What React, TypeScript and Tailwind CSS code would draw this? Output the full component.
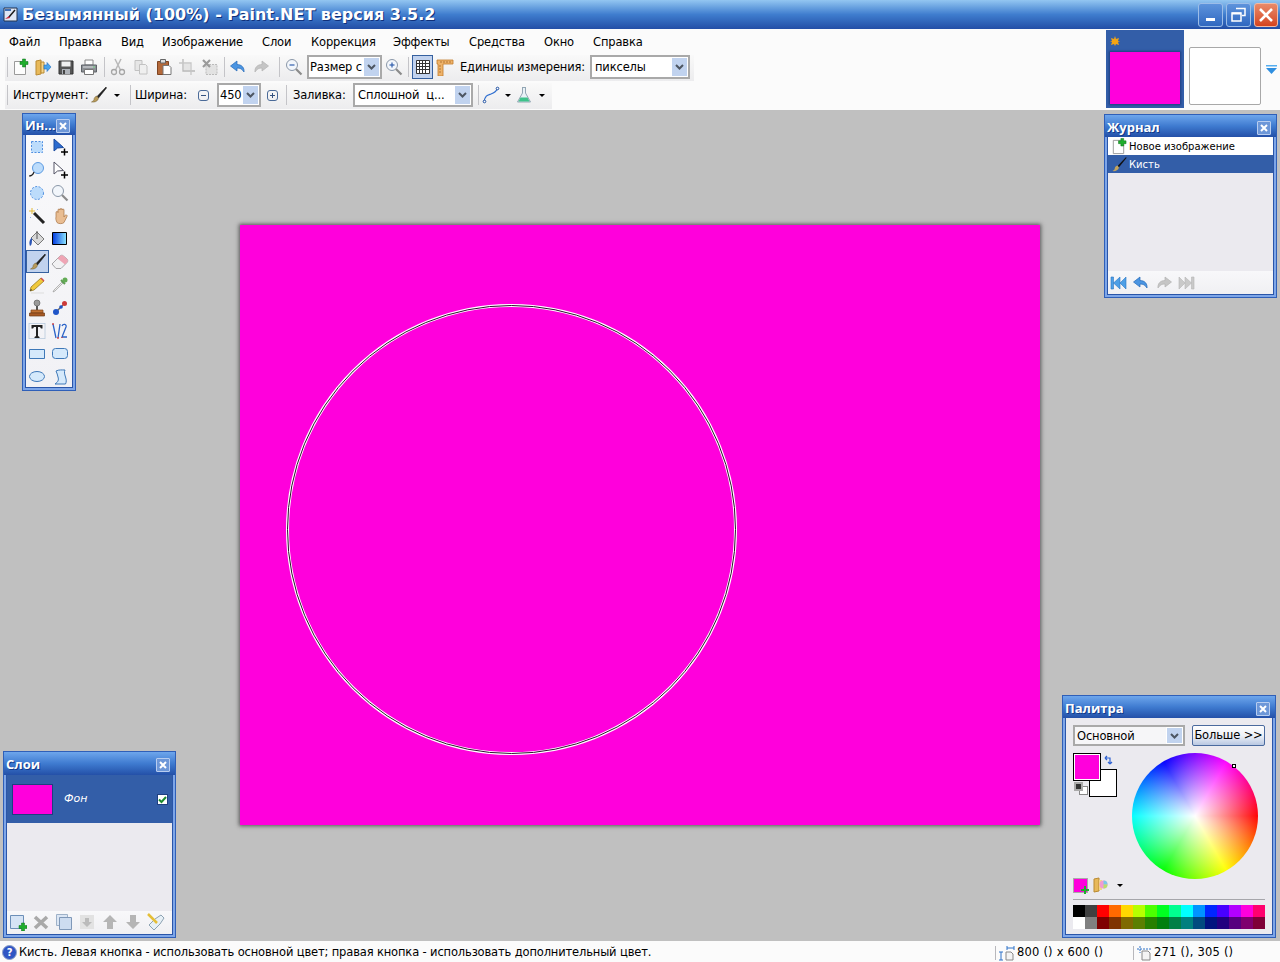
import React from "react";

const F = "font-['DejaVu_Sans',sans-serif]";
type P = { className?: string };
const S = ({ s = 18, children, v = 18 }: { s?: number; v?: number; children: React.ReactNode }) => (
  <svg width={s} height={s} viewBox={`0 0 ${v} ${v}`} className="block shrink-0">{children}</svg>
);

const Plus = ({ x, y, c = "#1fae2c" }: { x: number; y: number; c?: string }) => (
  <path d={`M${x - 1.5} ${y - 4}h3v2.5h2.5v3h-2.5v2.5h-3v-2.5h-2.5v-3h2.5z`} fill={c} stroke="#0b6d18" strokeWidth=".5" />
);
const NewDoc = () => <S><path d="M3.500 3.500h9l2 2v11h-11z" fill="#fdfdfd" stroke="#9a9a9a" /><Plus x={13} y={5} /></S>;
const Folder = () => <S><path d="M2 3l5-1v14l-5 1z" fill="#e8b95a" stroke="#b98a33" /><path d="M7 4h3v11H7z" fill="#f4d58a" stroke="#b98a33" /><path d="M10 7h3V4.500l4 4.500-4 4.500V11h-3z" fill="#49a3ea" stroke="#2570c0" strokeWidth=".6" /></S>;
const Save = () => <S><path d="M2 3h14v13H2z" fill="#555" stroke="#333" /><path d="M4.500 3.500h9v5h-9z" fill="#f0f0f0" /><path d="M5 11h8v5H5z" fill="#aeb2b8" /><path d="M6 12h2v4H6z" fill="#444" /></S>;
const Print = () => <S><path d="M5 2h8v5H5z" fill="#fff" stroke="#888" /><path d="M1.500 7h15v7h-15z" fill="#8d9196" stroke="#5f6368" /><path d="M4.500 11.500h9v5h-9z" fill="#fff" stroke="#777" /><path d="M3 9h12" stroke="#dfe1e4" /><circle cx="14" cy="9" r=".8" fill="#52c466" /></S>;
const Cut = () => <S><path d="M6 1l5.500 11M12 1L6.500 12" stroke="#b9b9b9" strokeWidth="1.500" fill="none" /><circle cx="5" cy="14" r="2.500" fill="none" stroke="#a5a5a5" strokeWidth="1.300" /><circle cx="13" cy="14" r="2.500" fill="none" stroke="#a5a5a5" strokeWidth="1.300" /></S>;
const Copy = () => <S><path d="M3 2.500h7v10H3z" fill="#e6e6e6" stroke="#c2c2c2" /><path d="M7.500 6.500h6l1.500 1.500v8H7.500z" fill="#efefef" stroke="#c2c2c2" /></S>;
const Paste = () => <S><path d="M2.500 3.500h11v13h-11z" fill="#b4693a" stroke="#7f4522" /><path d="M5.500 1.500h5v3.500h-5z" fill="#ddd" stroke="#666" /><path d="M8 7.500h6l2 2v7H8z" fill="#fff" stroke="#777" /></S>;
const Crop = () => <S><path d="M5 1v12h12" fill="none" stroke="#b8b8b8" strokeWidth="1.300" /><path d="M1 5h12v12" fill="none" stroke="#c6c6c6" strokeWidth="1.300" /><path d="M6 6h6v6H6z" fill="#e4e4e4" /></S>;
const Desel = () => <S><path d="M5 6.500h11v10H5z" fill="#e2e2e2" stroke="#bbb" strokeDasharray="2 1" /><path d="M2 2l7 7M9 2l-7 7" stroke="#9b9b9b" strokeWidth="2.200" /></S>;
const Undo = ({ c = "#4b95e2", d = "#2468b8" }: { c?: string; d?: string }) => <S><path d="M8 3L1.500 8 8 13v-3c3 0 5 .8 7 4 .5-4-2-7.500-7-7.500z" fill={c} stroke={d} strokeWidth=".7" strokeLinejoin="round" /></S>;
const Redo = ({ c = "#c5c5c5", d = "#b3b3b3" }: { c?: string; d?: string }) => <S><path d="M10 3l6.500 5L10 13v-3c-3 0-5 .8-7 4-.5-4 2-7.500 7-7.500z" fill={c} stroke={d} strokeWidth=".7" strokeLinejoin="round" /></S>;
const Mag = ({ sign }: { sign?: "+" | "-" }) => <S><circle cx="7" cy="7" r="5.500" fill="#f2f6fb" stroke="#8a97a8" /><path d="M11 11l5.500 5.500" stroke="#8b8b8b" strokeWidth="2.200" />{sign && <path d="M4.500 7h5" stroke="#2f5fae" strokeWidth="1.200" />}{sign === "+" && <path d="M7 4.500v5" stroke="#2f5fae" strokeWidth="1.200" />}</S>;
const Grid = () => <S s={16} v={16}><path d="M1.500 1.500h13v13h-13z" fill="#fff" stroke="#333" /><path d="M4.500 1.500v13M7.500 1.500v13M10.500 1.500v13M1.500 4.500h13M1.500 7.500h13M1.500 10.500h13" stroke="#333" /></S>;
const Ruler = () => <S s={18}><path d="M1 2h16v4H7v12H2V6H1z" fill="#eeb36a" stroke="#c17c2c" strokeWidth=".8" /><path d="M5 3v2M8 3v2M11 3v2M14 3v2M3 8h2M3 11h2M3 14h2" stroke="#9a5d1d" strokeWidth=".7" /></S>;
const Brush = () => <S><path d="M17 1L8 10.500l1.500 1.500L17.500 2z" fill="#222" stroke="#111" strokeWidth=".5" /><path d="M8 10c-2 .5-3 2-3 3.500-.3 1.500-2 2-2.500 2.500 3 .5 6-.5 7-3.500z" fill="#b89a5a" stroke="#6c5a2f" strokeWidth=".5" /></S>;
const Curve = () => <S><path d="M2 16c1-7 4-7 7-8s5-2 7-6" fill="none" stroke="#2f6fd0" strokeWidth="1.300" /><circle cx="2.500" cy="15.500" r="1.300" fill="#fff" stroke="#1f4fa0" /><circle cx="15.500" cy="2.500" r="1.300" fill="#fff" stroke="#1f4fa0" /></S>;
const Flask = () => <S><path d="M7 1.500h4M7.500 2v5L2.500 16h13l-5-9V2" fill="#e9f1f6" stroke="#93a6b4" /><path d="M5.500 11.500h7l2 4H3.500z" fill="#3ec28a" /></S>;
const Caret = () => <span className="block w-0 h-0 border-x-[3px] border-x-transparent border-t-[3px] border-t-black" />;
const Arr = () => <svg width="9" height="6" viewBox="0 0 9 6"><path d="M1 1l3.500 3.500L8 1" fill="none" stroke="#4d5662" strokeWidth="2" /></svg>;

const ToolDash = ({ round }: { round?: boolean }) => <S>{round ? <circle cx="9" cy="9" r="6.500" fill="#bcdcfb" stroke="#4f8fe0" strokeDasharray="2 1.500" /> : <path d="M3.500 3.500h11v11h-11z" fill="#bcdcfb" stroke="#4f8fe0" strokeDasharray="2 1.500" />}</S>;
const Cross = () => <path d="M13.500 10.500v7M10 14h7" stroke="#000" strokeWidth="1.500" />;
const Tools = [
  () => <ToolDash />,
  () => <S><path d="M3 1v12l3.500-3 6-.5z" fill="#2c6cd0" stroke="#1b4a9e" /><Cross /></S>,
  () => <S><circle cx="10" cy="7" r="5.500" fill="#bcdcfb" stroke="#5d9be2" /><path d="M6 11c-1 3-3 4-5 4" fill="none" stroke="#222" strokeWidth="1.200" /></S>,
  () => <S><path d="M3 1v12l3.500-3 6-.5z" fill="#fff" stroke="#556" /><Cross /></S>,
  () => <ToolDash round />,
  () => <Mag />,
  () => <S><path d="M6 6l10 10" stroke="#222" strokeWidth="3" /><path d="M4 1v6M1 4h6" stroke="#e2b93a" strokeWidth="1" /><path d="M9 2l1 1M2 10l1 1" stroke="#8fb4e8" /></S>,
  () => <S><path d="M5 9V5.500a1 1 0 012 0V3a1 1 0 012 0v-.5a1 1 0 012 0V3a1 1 0 012 0v7l1-1.500a1 1 0 012 1l-3 6c-1 1.500-6 1.500-7 0-1-2-1.500-4-1-5.500z" fill="#e9bd92" stroke="#a87445" strokeWidth=".7" /></S>,
  () => <S><path d="M9 2l7 7-6 6-7-7z" fill="#d8d8d8" stroke="#777" /><path d="M4 8c-3 1-3 6-2 8 2-1 2-4 2-8z" fill="#2b55b5" /><path d="M9 1v8" stroke="#555" /></S>,
  () => <svg width="15" height="13" viewBox="0 0 15 13"><defs><linearGradient id="gt" x1="0" x2="1" y1="0" y2="0"><stop offset="0" stopColor="#0038e0" /><stop offset="1" stopColor="#8fe8ff" /></linearGradient></defs><path d="M.5.5h14v12H.5z" fill="url(#gt)" stroke="#000" strokeWidth="1" /></svg>,
  () => <Brush />,
  () => <S><path d="M1 11l8-8c1-1 2.500-1 3.500 0l3.500 3c1 1 1 2.500 0 3.500L10 15.500H5z" fill="#f1f1f3" stroke="#a5a5a8" /><path d="M6.500 5.500l2.500-2.500c1-1 2.500-1 3.500 0l3.500 3c1 1 1 2.500 0 3.500l-2 2z" fill="#efa5b5" /></S>,
  () => <S><path d="M2 15l1-4 10-9 3 3-10 9z" fill="#f0c93c" stroke="#8a6d14" strokeWidth=".7" /><path d="M13 2l3 3" stroke="#d24f4f" strokeWidth="1.500" /><path d="M2 15l1-2 1 1z" fill="#222" /><path d="M3 17h13" stroke="#ddd" /></S>,
  () => <S><path d="M11 6l-8 8-1 2 2-1 8-8z" fill="#eee" stroke="#999" strokeWidth=".7" /><path d="M10 4l4 4" stroke="#5c9b52" strokeWidth="2" /><circle cx="14" cy="4" r="2.500" fill="#62ab55" /></S>,
  () => <S><circle cx="9" cy="4" r="3" fill="#9a9a9a" stroke="#555" strokeWidth=".6" /><path d="M8 7h2v5H8z" fill="#555" /><path d="M3 11h12v3H3z" fill="#c07133" stroke="#7f451b" strokeWidth=".7" /><path d="M1.500 14h15v3h-15z" fill="#a85a25" stroke="#6b3a15" strokeWidth=".7" /></S>,
  () => <S><path d="M6 12l6-6" stroke="#666" strokeWidth="1.500" /><circle cx="5" cy="13" r="3" fill="#1f55c8" /><circle cx="10" cy="8" r="1.800" fill="#1f55c8" /><circle cx="13.500" cy="4.500" r="2.500" fill="#cc3a3a" /></S>,
  () => <S><path d="M1 1.500h16M1 16.500h16M1 1v16M17 1v16" stroke="#b7c9dd" strokeWidth=".8" /><path d="M3.500 3h11v3.500h-1.500L12 5h-2v9l1.500 1v1h-5v-1l1.500-1V5H6L5 6.500H3.500z" fill="#222" /></S>,
  () => <S><path d="M2 2l3 14M9 2L7 16" stroke="#2a63c8" strokeWidth="1.300" /><path d="M11 4c1-2.500 5-2 4 1l-4 10h5" fill="none" stroke="#2a63c8" strokeWidth="1.300" /><path d="M2 1v2M7 15v2M11 15v1" stroke="#d13a3a" strokeWidth="1.300" /></S>,
  () => <svg width="16" height="10" viewBox="0 0 16 10"><path d="M.5.5h15v9H.5z" fill="#d5e9fb" stroke="#3e78b8" /></svg>,
  () => <svg width="16" height="11" viewBox="0 0 16 11"><rect x=".5" y=".5" width="15" height="10" rx="3" fill="#d5e9fb" stroke="#3e78b8" /></svg>,
  () => <svg width="16" height="11" viewBox="0 0 16 11"><ellipse cx="8" cy="5.500" rx="7.500" ry="5" fill="#d5e9fb" stroke="#3e78b8" /></svg>,
  () => <S><path d="M5 3c3-1.500 6-1 9-1-1 2-.5 4 .5 7 1 3 1 5 0 7H4c3-2 4-4 3-7-.5-2-1-4-2-6z" fill="#d5e9fb" stroke="#3e78b8" /></S>,
];

const Sep = ({ className = "" }: P) => <span className={`block w-px h-[20px] bg-[#c4c4c8] ${className}`} />;
const B = ({ children, className = "" }: { children: React.ReactNode; className?: string }) => (
  <span className={`flex items-center justify-center w-[23px] h-[22px] shrink-0 ${className}`}>{children}</span>
);
const Combo = ({ text, className, clip }: { text: string; className: string; clip?: boolean }) => (
  <div className={`flex h-[24px] border-2 border-[#a9a9a9] bg-white shrink-0 ${className}`}>
    <span className={`flex-1 min-w-0 overflow-hidden whitespace-pre leading-[20px] ${clip ? "pl-px" : "pl-[3px]"}`}>{text}</span>
    <span className="flex items-center justify-center w-[17px] bg-[#c1d3ef] border border-white"><Arr /></span>
  </div>
);

const X = () => (
  <span className="flex items-center justify-center w-[14px] h-[14px] bg-[#6d97d8] border border-[#b8cdf0] rounded-[1px]">
    <svg width="8" height="8" viewBox="0 0 8 8"><path d="M1 1l6 6M7 1L1 7" stroke="#fff" strokeWidth="2" /></svg>
  </span>
);
const Win = ({ title, className, children, bar = "" }: { title: string; className: string; children: React.ReactNode; bar?: string }) => (
  <div className={`absolute flex flex-col border border-[#2f5fb8] bg-[#7ea6e8] px-[2px] pb-[2px] ${className}`}>
    <div className={`flex items-center justify-between shrink-0 -mx-[2px] pl-[2px] pr-[5px] pt-[3px] bg-gradient-to-b from-[#6ea6ec] via-[#3f7bd0] to-[#2450a8] text-white font-bold text-[13px] font-['Open_Sans',sans-serif] tracking-normal [text-shadow:1px_1px_0_#123a8a] ${bar}`}>
      <span className="whitespace-nowrap">{title}</span>
      <X />
    </div>
    <div className="flex flex-col flex-1 min-h-0 border border-t-0 border-[#2a55a8] bg-[#ebeaef] overflow-hidden">{children}</div>
  </div>
);
const TB = ({ children, className = "" }: { children: React.ReactNode; className?: string }) => (
  <div className={`flex items-center mt-auto h-[23px] bg-gradient-to-b from-[#f8f8fa] to-[#f0f0f3] ${className}`}>{children}</div>
);

const top = ["#000000","#404040","#ff0000","#ff6a00","#ffd800","#b6ff00","#4cff00","#00ff21","#00ff90","#00ffff","#0094ff","#0026ff","#4800ff","#b200ff","#ff00dc","#ff006e"];
const bot = ["#ffffff","#808080","#7f0000","#7f3300","#7f6a00","#5b7f00","#267f00","#007f0e","#007f46","#007f7f","#004a7f","#00137f","#21007f","#57007f","#7f006e","#7f0037"];

const menu: [string, string][] = [["Файл","w-[50px]"],["Правка","w-[62px]"],["Вид","w-[41px]"],["Изображение","w-[100px]"],["Слои","w-[49px]"],["Коррекция","w-[82px]"],["Эффекты","w-[76px]"],["Средства","w-[75px]"],["Окно","w-[49px]"],["Справка","w-[60px]"]];

export default function App() {
  return (
    <div className={`flex flex-col w-[1280px] h-[962px] overflow-hidden bg-[#c0c0c0] text-[11.5px] text-black tracking-[-0.15px] ${F}`}>
      {/* Title bar */}
      <div className="flex items-center h-[29px] shrink-0 bg-gradient-to-b from-[#93c6f1] via-[#3f7dce] to-[#234ea6]">
        <div className="ml-[3px] w-[15px] h-[15px] shrink-0">
          <svg width="15" height="15" viewBox="0 0 15 15"><path d="M1 1h13v13H1z" fill="#dfe7f5" stroke="#22324f" /><path d="M12 3l-6 7" stroke="#1a1a1a" strokeWidth="1.500" /><path d="M2 12l5-1-1-2z" fill="#c9273a" /><path d="M2 2h6v2H2z" fill="#3f6fb5" /></svg>
        </div>
        <span className="ml-[4px] text-white font-bold text-[16px] tracking-normal whitespace-nowrap [text-shadow:1px_1px_0_#10307a]">Безымянный (100%) - Paint.NET версия 3.5.2</span>
        <div className="ml-auto mr-[2px] flex gap-[3px]">
          <span className="flex items-end justify-center pb-[5px] w-[25px] h-[24px] rounded-[3px] border border-[#9cbde8] bg-gradient-to-b from-[#5d93dc] to-[#3068c0]"><span className="block w-[9px] h-[3px] bg-white" /></span>
          <span className="flex items-center justify-center w-[25px] h-[24px] rounded-[3px] border border-[#9cbde8] bg-gradient-to-b from-[#5d93dc] to-[#3068c0]">
            <svg width="15" height="15" viewBox="0 0 15 15"><path d="M5 1.500h9v7h-3M1 6h9v8H1z" fill="none" stroke="#fff" strokeWidth="1.500" /><path d="M1 6.500h9" stroke="#fff" strokeWidth="2" /></svg>
          </span>
          <span className="flex items-center justify-center w-[24px] h-[24px] rounded-[3px] border border-[#f0b9a5] bg-gradient-to-b from-[#e88a6a] to-[#d5431c]">
            <svg width="14" height="14" viewBox="0 0 14 14"><path d="M1 1l12 12M13 1L1 13" stroke="#fff" strokeWidth="2.600" /></svg>
          </span>
        </div>
      </div>

      {/* Menu, toolbars, thumbnails */}
      <div className="flex h-[81px] shrink-0 bg-[#fbfbfb]">
        <div className="flex-1 min-w-0">
          <div className="flex items-center h-[26px] pl-[9px] pt-px">
            {menu.map(([m, w]) => <span key={m} className={`block whitespace-nowrap ${w}`}>{m}</span>)}
          </div>
          <div className="flex items-center w-[689px] h-[26px] ml-[5px] pl-[2px] pb-[2px] bg-gradient-to-b from-[#f9f9f9] to-[#ececee]">
            <Sep />
            <B><NewDoc /></B><B><Folder /></B><B><Save /></B><B><Print /></B>
            <Sep className="ml-[4px] mr-[1px]" />
            <B><Cut /></B><B><Copy /></B><B><Paste /></B><B><Crop /></B><B><Desel /></B>
            <Sep className="ml-[3px] mr-[1px]" />
            <B><Undo /></B><B><Redo /></B>
            <Sep className="ml-[7px] mr-[1px]" />
            <B className="ml-[1px]"><Mag sign="-" /></B>
            <Combo text="Размер с" clip className="w-[75px] ml-[2px]" />
            <B><Mag sign="+" /></B>
            <Sep className="ml-[3px]" />
            <span className="flex items-center justify-center ml-[3px] w-[21px] h-[24px] bg-[#c1d2ee] border border-[#35609f]"><Grid /></span>
            <B><Ruler /></B>
            <span className="ml-[4px] w-[130px] pt-px whitespace-nowrap">Единицы измерения:</span>
            <Combo text="пикселы" className="w-[100px]" />
          </div>
          <div className="flex items-center w-[547px] h-[26px] mt-[2px] ml-[5px] pl-[2px] pb-[2px] bg-gradient-to-b from-[#f9f9f9] to-[#ececee]">
            <Sep />
            <span className="ml-[5px] w-[73px] pt-px whitespace-nowrap">Инструмент:</span>
            <span className="ml-[3px]"><Brush /></span>
            <span className="ml-[7px]"><Caret /></span>
            <Sep className="ml-[10px]" />
            <span className="ml-[4px] w-[52px] pt-px whitespace-nowrap">Ширина:</span>
            <span className="flex items-center justify-center ml-[11px] w-[11px] h-[11px] rounded-[3px] border border-[#4a6a98] text-[#34527f]"><span className="block w-[5px] h-px bg-[#34527f]" /></span>
            <Combo text="450" clip className="w-[44px] ml-[8px]" />
            <span className="relative flex items-center justify-center ml-[6px] w-[11px] h-[11px] rounded-[3px] border border-[#4a6a98]"><span className="block w-[5px] h-px bg-[#34527f]" /><span className="absolute block w-px h-[5px] bg-[#34527f]" /></span>
            <Sep className="ml-[8px]" />
            <span className="ml-[6px] w-[54px] pt-px whitespace-nowrap">Заливка:</span>
            <Combo text="Сплошной  ц..." className="w-[120px] ml-[6px]" />
            <Sep className="ml-[5px]" />
            <span className="ml-[3px]"><Curve /></span>
            <span className="ml-[5px]"><Caret /></span>
            <span className="ml-[4px]"><Flask /></span>
            <span className="ml-[6px]"><Caret /></span>
          </div>
        </div>
        <div className="flex w-[174px] shrink-0 items-start pt-px">
          <div className="flex flex-col w-[78px] h-[78px] bg-[#335ea8] px-[4px] shrink-0">
            <div className="h-[22px] flex items-center">
              <svg width="10" height="10" viewBox="0 0 10 10"><path d="M5 0l1 3 3-1-1 3 2 0-2 1 1 3-3-1-1 2-1-2-3 1 1-3-2-1 2 0-1-3 3 1z" fill="#f3a414" /></svg>
            </div>
            <div className="w-[70px] h-[52px] bg-[#ff00dc] shadow-[0_0_2px_1px_#1c3c80]" />
          </div>
          <div className="ml-[5px] mt-[17px] w-[72px] h-[58px] bg-white border border-[#a8a8a8] rounded-[2px]" />
          <svg className="ml-[5px] mt-[35px]" width="11" height="10" viewBox="0 0 11 10"><path d="M0 0h11v1.500H0z" fill="#55aef0" /><path d="M0 3h11L5.500 9z" fill="#2f8fe0" /></svg>
        </div>
      </div>

      {/* Workspace */}
      <div className="relative flex-1 min-h-0 flex items-center justify-center pb-px bg-[#c0c0c0]">
        <div className="relative w-[800px] h-[600px] bg-[#ff00dc] shadow-[0_0_4px_1px_#555]">
          <svg className="absolute left-0 top-0" width="800" height="600" viewBox="0 0 800 600">
            <circle cx="271.500" cy="304.500" r="224" fill="none" stroke="#fff" strokeWidth="3" />
            <circle cx="271.500" cy="304.500" r="224" fill="none" stroke="#301030" strokeWidth="1" />
          </svg>
        </div>

        {/* Tools */}
        <Win title="Ин..." bar="h-[21px]" className="left-[22px] top-[3px] w-[54px] h-[278px]">
          <div className="grid grid-cols-[23px_23px] auto-rows-[23px] justify-start bg-gradient-to-b from-[#f9f9fb] to-[#f1f1f5] flex-1">
            {Tools.map((T, i) => (
              <span key={i} className={`flex items-center justify-center pr-[2px] ${i === 10 ? "bg-[#c1d2ee] border border-[#35609f]" : ""}`}><T /></span>
            ))}
          </div>
        </Win>

        {/* History */}
        <Win title="Журнал" bar="h-[22px]" className="left-[1104px] top-[4px] w-[173px] h-[184px]">
          <div className="flex items-center h-[18px] bg-white shrink-0 text-[10px] tracking-normal"><span className="w-[21px] pl-[2px]"><S s={17}><path d="M3.500 2.500h9l2 2v12h-11z" fill="#fff" stroke="#9a9a9a" /><Plus x={13} y={4.500} /></S></span><span>Новое изображение</span></div>
          <div className="flex items-center h-[18px] bg-[#335ea8] text-white shrink-0 text-[10px] tracking-normal"><span className="w-[21px] pl-[2px]"><S s={17}><path d="M17 1L8 10.500l1.500 1.500L17.500 2z" fill="#111" /><path d="M8 10c-2 .5-3 2-3 3.500-.3 1.500-2 2-2.500 2.500 3 .5 6-.5 7-3.500z" fill="#c2a35c" /></S></span><span>Кисть</span></div>
          <TB className="pl-[1px] gap-[5px]">
            <svg width="18" height="14" viewBox="0 0 18 14"><path d="M2 1h2.500v12H2zM11 1v12L4.500 7zM17 1v12l-6-6z" fill="#4d9fe6" stroke="#2a76c2" strokeWidth=".6" /></svg>
            <Undo />
            <Redo />
            <svg width="18" height="14" viewBox="0 0 18 14"><path d="M16 1h-2.500v12H16zM7 1v12l6.500-6zM1 1v12l6-6z" fill="#c9c9c9" stroke="#b5b5b5" strokeWidth=".6" /></svg>
          </TB>
        </Win>

        {/* Layers */}
        <Win title="Слои" bar="h-[23px]" className="left-[3px] top-[641px] w-[173px] h-[187px]">
          <div className="flex items-center h-[48px] bg-[#335ea8] text-white shrink-0 pl-[5px]">
            <div className="w-[41px] h-[31px] bg-[#ff00dc] border border-[#1e3f80]" />
            <span className="ml-[11px] text-[11px] tracking-normal italic">Фон</span>
            <span className="ml-auto mr-[4px] flex items-center justify-center w-[11px] h-[11px] bg-white border border-[#1e3f80]">
              <svg width="9" height="9" viewBox="0 0 9 9"><path d="M1 4.500l2.500 2.500L8 2" fill="none" stroke="#1c8a2e" strokeWidth="2" /></svg>
            </span>
          </div>
          <TB className="pl-[2px] pb-[2px] gap-[5px]">
            <S><path d="M1.500 2.500h13v13h-13z" fill="#d6e4f5" stroke="#6c8fb8" /><Plus x={14} y={14} /></S>
            <S><path d="M3 4l12 11M15 4L3 15" stroke="#a9a9a9" strokeWidth="3.600" /></S>
            <S><path d="M1.500 1.500h11v11h-11z" fill="#dbe6f4" stroke="#9eb1c8" /><path d="M4.500 4.500h12v12h-12z" fill="#cddcf0" stroke="#7f98b8" /></S>
            <S><path d="M2 2h14v14H2z" fill="#e2e2e2" /><path d="M7 5h4v4h3l-5 5-5-5h3z" fill="#bbb" /></S>
            <S><path d="M9 2l7 7h-4v7H6V9H2z" fill="#b5b5b5" /></S>
            <S><path d="M9 16l7-7h-4V2H6v7H2z" fill="#b5b5b5" /></S>
            <S><path d="M8 6l6-4 3 3-4 6-6 6-5-5z" fill="#e7f0f6" stroke="#8ca2b2" /><path d="M1 1l9 9" stroke="#e5bf38" strokeWidth="2.500" /></S>
          </TB>
        </Win>

        {/* Palette */}
        <Win title="Палитра" bar="h-[22px]" className="left-[1062px] top-[585px] w-[214px] h-[243px]">
          <div className="flex flex-col px-[7px] pt-[7px]">
            <div className="flex justify-between">
              <div className="flex h-[21px] w-[112px] border-2 border-[#a9a9a9] bg-[#f6f6f8]">
                <span className="flex-1 pl-[2px] leading-[18px]">Основной</span>
                <span className="flex items-center justify-center w-[17px] bg-[#c1d3ef] border border-white"><Arr /></span>
              </div>
              <span className="flex items-center justify-center w-[73px] h-[21px] whitespace-nowrap rounded-[2px] border border-[#4a6a9e] bg-gradient-to-b from-[#fdfdfe] via-[#eef1f7] to-[#b9c8e2]">Больше &gt;&gt;</span>
            </div>
            <div className="flex mt-[7px]">
              <div className="w-[44px] h-[45px] shrink-0 relative">
                <div className="absolute left-[16px] top-[16px] w-[28px] h-[28px] bg-white border border-black" />
                <div className="absolute left-0 top-0 w-[28px] h-[28px] bg-[#ff00dc] border border-black outline outline-1 outline-white -outline-offset-2" />
                <svg className="absolute left-[31px] top-[2px]" width="10" height="11" viewBox="0 0 10 11"><path d="M1 3h5v6M1 3l2-2M1 3l2 2M6 9l-2-2M6 9l2-2" fill="none" stroke="#2f62d2" strokeWidth="1.200" /></svg>
                <div className="absolute left-[6px] top-[33px] w-[9px] h-[9px] bg-white border border-[#888]" />
                <div className="absolute left-[1px] top-[29px] w-[9px] h-[9px] bg-[#333] border-2 border-[#aaa]" />
              </div>
              <div className="relative ml-[15px] w-[126px] h-[126px] rounded-full shrink-0 bg-[radial-gradient(circle,#ffffff_0%,#ffffff00_72%),conic-gradient(from_0deg,#8000ff,#ff00ff_30deg,#ff0000_90deg,#ffff00_150deg,#00ff00_210deg,#00ffff_270deg,#0000ff_330deg,#8000ff)]">
                <span className="absolute left-[100px] top-[11px] w-[4px] h-[4px] bg-white border border-black" />
              </div>
            </div>
            <div className="flex items-center gap-[5px] -mt-[3px] h-[18px]">
              <span className="relative block w-[15px] h-[15px] bg-[#ff00dc] border border-[#aaa]">
                <span className="absolute left-[7px] top-[7px]"><svg width="8" height="8" viewBox="0 0 8 8"><path d="M3 0h2v3h3v2H5v3H3V5H0V3h3z" fill="#1fae2c" /></svg></span>
              </span>
              <svg width="16" height="16" viewBox="0 0 16 16"><path d="M1 2l5-1v13l-5 1z" fill="#e8b95a" stroke="#b98a33" /><path d="M6 3h3v10H6z" fill="#f4d58a" /><circle cx="10.500" cy="7.500" r="4" fill="#f29ad0" /><path d="M10.500 7.500V3.500a4 4 0 014 4z" fill="#7ac9e8" /><path d="M10.500 7.500h4a4 4 0 01-4 4z" fill="#b8e06a" /></svg>
              <span className="ml-[3px]"><Caret /></span>
            </div>
            <div className="h-px bg-[#a6a6ab] mt-[5px]" />
            <div className="grid grid-cols-[repeat(16,12px)] grid-rows-[12px_12px] mt-[5px]">
              {[...top, ...bot].map((c, i) => <span key={i} style={{ backgroundColor: c }} />)}
            </div>
          </div>
        </Win>
      </div>

      {/* Status bar */}
      <div className="flex items-center h-[21px] shrink-0 bg-[#fbfbfb] pt-[2px]">
        <span className="ml-[2px] flex items-center justify-center w-[15px] h-[15px] rounded-full bg-[#2f55c4] border border-[#8fa2c8] text-white text-[10px] font-bold">?</span>
        <span className="ml-[2px] whitespace-nowrap pt-px">Кисть. Левая кнопка - использовать основной цвет; правая кнопка - использовать дополнительный цвет.</span>
        <span className="ml-auto block w-px h-[14px] bg-[#b8b8bc]" />
        <svg className="ml-[2px]" width="17" height="16" viewBox="0 0 17 16"><path d="M9 1v4M16 1v4M9 3h7M3 7v8M1 7h4M1 15h4" stroke="#2f72c8" /><path d="M8 7h5l2 2v6H8z" fill="#f4f4f4" stroke="#888" /></svg>
        <span className="ml-[2px] w-[116px] whitespace-pre pt-px tracking-[0.2px]">800 () x 600 ()</span>
        <span className="block w-px h-[14px] bg-[#b8b8bc]" />
        <svg className="ml-[2px]" width="16" height="16" viewBox="0 0 16 16"><path d="M4 1v7M1 4h14" stroke="#2f72c8" strokeDasharray="2 1" /><path d="M6 6h6l2 2v7H6z" fill="#f4f4f4" stroke="#888" /></svg>
        <span className="ml-[2px] w-[126px] whitespace-pre pt-px tracking-[0.2px]">271 (), 305 ()</span>
      </div>
    </div>
  );
}
